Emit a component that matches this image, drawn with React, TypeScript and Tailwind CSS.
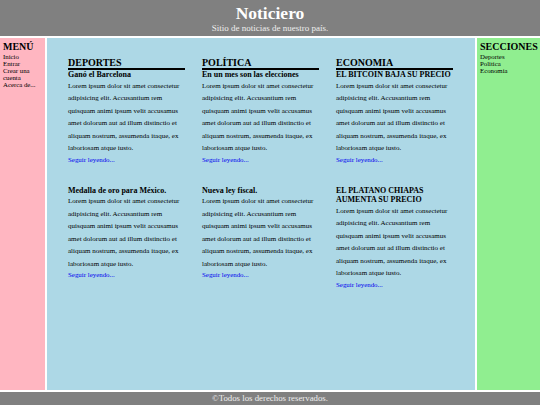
import React from "react";

const LOREM =
  "Lorem ipsum dolor sit amet consectetur adipisicing elit. Accusantium rem quisquam animi ipsum velit accusamus amet dolorum aut ad illum distinctio et aliquam nostrum, assumenda itaque, ex laboriosam atque iusto.";

type Article = { section?: string; title: string };

const row1: Article[] = [
  { section: "DEPORTES", title: "Ganó el Barcelona" },
  { section: "POLÍTICA", title: "En un mes son las elecciones" },
  { section: "ECONOMIA", title: "EL BITCOIN BAJA SU PRECIO" },
];

const row2: Article[] = [
  { title: "Medalla de oro para México." },
  { title: "Nueva ley fiscal." },
  { title: "EL PLATANO CHIAPAS AUMENTA SU PRECIO" },
];

function ArticleCard({ a }: { a: Article }) {
  return (
    <article className="flex flex-col">
      {a.section && (
        <h2 className="text-[10px] leading-[11px] font-bold border-b-2 border-black">
          {a.section}
        </h2>
      )}
      <h3 className="text-[8px] leading-[9.5px] font-bold">{a.title}</h3>
      <p className="text-[7px] leading-[12.5px] w-[113px]">{LOREM}</p>
      <a href="#" className="text-[6.9px] leading-[10px] text-[#0000ee]">
        Seguir leyendo...
      </a>
    </article>
  );
}

export default function App() {
  return (
    <div className="h-[405px] w-[540px] flex flex-col gap-[2px] bg-white font-['Liberation_Serif',serif] text-black">
      <header className="h-[36px] bg-[#808080] flex flex-col items-center pt-[3px] text-white">
        <h1 className="text-[17.5px] leading-[20px] font-bold">Noticiero</h1>
        <p className="text-[9px] leading-[11px] text-[#eeeeee]">
          Sitio de noticias de nuestro país.
        </p>
      </header>
      <div className="flex-1 flex gap-[2px] min-h-0">
        <nav className="w-[45px] bg-[#ffb6c1] px-[3px] pt-[3px]">
          <h2 className="text-[10px] leading-[11px] font-bold">MENÚ</h2>
          <ul className="mt-[1px] text-[6.8px] leading-[7px]">
            <li>Inicio</li>
            <li>Entrar</li>
            <li>Crear una cuenta</li>
            <li>Acerca de...</li>
          </ul>
        </nav>
        <main className="flex-1 bg-[#add8e6] pl-[21px] pt-[19px]">
          <div className="grid grid-cols-[117px_117px_117px] gap-x-[17px] gap-y-[21px] items-start">
            {row1.map((a) => (
              <ArticleCard key={a.title} a={a} />
            ))}
            {row2.map((a) => (
              <ArticleCard key={a.title} a={a} />
            ))}
          </div>
        </main>
        <aside className="w-[63px] bg-[#90ee90] px-[3px] pt-[3px]">
          <h2 className="text-[10px] leading-[11px] font-bold">SECCIONES</h2>
          <ul className="mt-[1px] text-[6.8px] leading-[7.2px]">
            <li>Deportes</li>
            <li>Politica</li>
            <li>Economia</li>
          </ul>
        </aside>
      </div>
      <footer className="h-[13px] bg-[#808080] flex items-center justify-center text-[8.8px] leading-[13px] text-[#eeeeee]">
        ©Todos los derechos reservados.
      </footer>
    </div>
  );
}
